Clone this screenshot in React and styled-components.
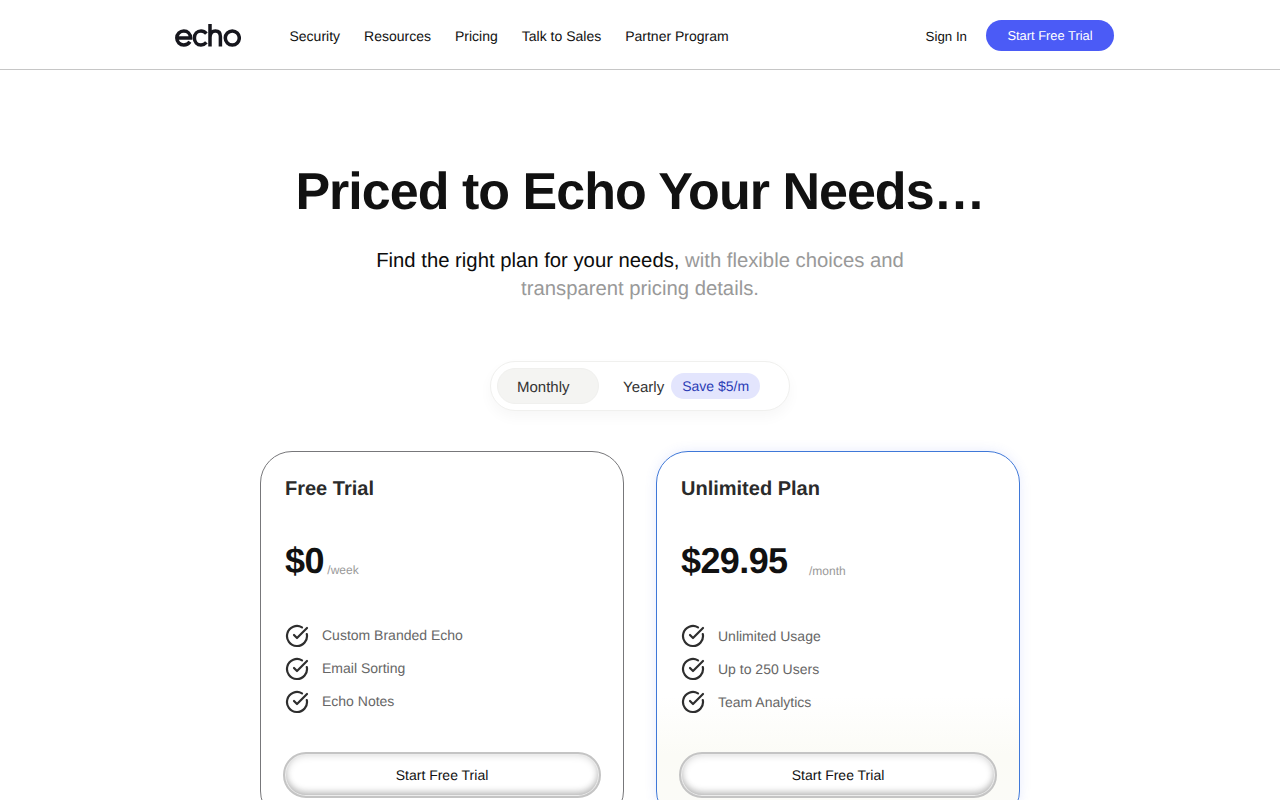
import React from "react";
import styled, { createGlobalStyle } from "styled-components";
import { CircleCheckBig } from "lucide-react";

const Global = createGlobalStyle`
  html, body { margin: 0; padding: 0; background: #fff; overflow: hidden; height: 800px; }
  body { font-family: "Liberation Sans", Arial, sans-serif; text-rendering: geometricPrecision; }
  * { box-sizing: border-box; }
`;

const Page = styled.div`
  width: 1280px;
  height: 800px;
  overflow: hidden;
`;

const Header = styled.header`
  height: 70px;
  border-bottom: 1px solid #c6c6c6;
  padding: 1px 166px 0 175px;
  display: flex;
  align-items: center;
  justify-content: space-between;
`;

const Left = styled.div`
  display: flex;
  align-items: center;
  gap: 48px;
`;

const Nav = styled.nav`
  display: flex;
  align-items: center;
  gap: 24px;
  padding: 2px 0 0 0.5px;
`;

const NavLink = styled.a`
  font-size: 14px;
  line-height: 20px;
  color: #111;
`;

const Right = styled.div`
  display: flex;
  align-items: center;
  gap: 19px;
`;

const SignIn = styled.a`
  font-size: 13.3px;
  color: #111;
  padding-top: 2px;
`;

const PrimaryButton = styled.button`
  width: 128px;
  height: 31px;
  border: none;
  border-radius: 16px;
  background: #4b5bf6;
  color: #fff;
  font: 12.9px "Liberation Sans", Arial, sans-serif;
  padding: 1px 0 0;
  text-rendering: geometricPrecision;
`;

const Hero = styled.section`
  display: flex;
  flex-direction: column;
  align-items: center;
  padding-top: 90px;
`;

const Title = styled.h1`
  margin: 0;
  font-size: 52px;
  line-height: 64px;
  font-weight: 700;
  letter-spacing: -0.98px;
  color: #111;
`;

const Sub = styled.p`
  margin: 23px 0 0;
  width: 560px;
  text-align: center;
  font-size: 20.3px;
  line-height: 28px;
  color: #999;
`;

const SubStrong = styled.span`
  color: #0c0c0c;
`;

const Toggle = styled.div`
  margin-top: 58px;
  width: 300px;
  height: 50px;
  padding: 7px 6px;
  border: 1px solid #f0f0ee;
  border-radius: 25px;
  background: #fff;
  box-shadow: 0 6px 14px rgba(0, 0, 0, 0.035);
  display: flex;
  align-items: center;
`;

const Monthly = styled.div`
  width: 102px;
  height: 36px;
  border-radius: 18px;
  background: #f4f4f2;
  border: 1px solid #f0f0ee;
  padding: 1px 0 0 19px;
  font-size: 15px;
  line-height: 36px;
  color: #333;
`;

const Yearly = styled.div`
  margin-left: 24px;
  font-size: 15px;
  color: #333;
  padding-top: 3px;
`;

const Save = styled.div`
  margin-left: 7px;
  width: 89px;
  height: 26px;
  border-radius: 13px;
  background: #e3e5fd;
  color: #2a3bb5;
  font-size: 14px;
  line-height: 26px;
  text-align: center;
`;

const Cards = styled.div`
  margin-top: 40px;
  display: flex;
  justify-content: center;
  gap: 32px;
`;

const Card = styled.article`
  width: 364px;
  height: 372px;
  flex: none;
  border: 1px solid ${(p) => (p.$featured ? "#3f78d8" : "#77777a")};
  border-radius: 32px;
  padding: 24px 24px 0;
  background: ${(p) =>
    p.$featured
      ? "linear-gradient(180deg, #fff 0%, #fff 66%, #fbfbf6 82%, #fbfbf8 100%)"
      : "#fff"};
  box-shadow: ${(p) => (p.$featured ? "0 0 12px rgba(80, 110, 240, 0.13)" : "none")};
`;

const PlanName = styled.h2`
  margin: 0;
  font-size: 20px;
  line-height: 26px;
  font-weight: 700;
  color: #2b2b2b;
`;

const PriceRow = styled.div`
  margin-top: 36px;
  height: 46px;
  display: flex;
  align-items: baseline;
`;

const Price = styled.span`
  font-size: 36px;
  line-height: 46px;
  font-weight: 700;
  letter-spacing: -0.6px;
  color: #111;
`;

const Period = styled.span`
  margin-left: ${(p) => p.$gap}px;
  font-size: 12px;
  color: #999;
  position: relative;
  top: ${(p) => p.$drop}px;
`;

const Features = styled.ul`
  list-style: none;
  margin: 40px 0 0;
  padding: 0;
  display: flex;
  flex-direction: column;
  gap: 9px;
`;

const Feature = styled.li`
  height: 24px;
  display: flex;
  align-items: center;
  gap: 13px;
  font-size: 14px;
  color: #666;
`;

const FeatureIcon = styled(CircleCheckBig).attrs({ strokeWidth: 2.2 })`
  width: 24px;
  height: 24px;
  flex: none;
  color: #2e2e2e;
`;

const FeatureText = styled.span`
  padding-bottom: ${(p) => p.$lift}px;
`;

const CardButton = styled.button`
  display: block;
  margin: 38px 0 0 -2px;
  width: 318px;
  height: 46px;
  border-radius: 23px;
  border: 2px solid #c4c4c4;
  background: #fff;
  box-shadow: inset 0 0 0 1px #ececec, inset 0 -5px 7px -1px rgba(0, 0, 0, 0.2), inset 0 0 9px rgba(0, 0, 0, 0.2);
  color: #111;
  font: 14px "Liberation Sans", Arial, sans-serif;
  text-rendering: geometricPrecision;
`;

const Logo = () => (
  <svg width="66" height="23" viewBox="0 0 66 23" fill="none" stroke="#16161d" strokeWidth="3.5">
    <path d="M1.8 14 H15.6 C15.4 9.8 12.6 7 8.8 7 C4.9 7 1.8 10 1.8 14 C1.8 18 4.9 21 8.8 21 C11.4 21 13.6 19.8 14.9 17.8" />
    <path d="M31.4 9.6 C30 8 28.2 7 26 7 C22.2 7 19.4 10 19.4 14 C19.4 18 22.2 21 26 21 C28.2 21 30 20 31.4 18.4" />
    <path d="M35 0 V22.6 M35 13.6 C35 9.4 37.4 7 40.4 7 C43.8 7 45.4 9.4 45.4 12.6 V22.6" />
    <circle cx="57.3" cy="14" r="7" />
  </svg>
);

const plans = [
  {
    name: "Free Trial", price: "$0", period: "/week", gap: 3.5, drop: 1, lift: 2,
    items: ["Custom Branded Echo", "Email Sorting", "Echo Notes"],
  },
  {
    name: "Unlimited Plan", price: "$29.95", period: "/month", gap: 21.5, drop: 2, lift: 0, featured: true,
    items: ["Unlimited Usage", "Up to 250 Users", "Team Analytics"],
  },
];

export default function App() {
  return (
    <Page>
      <Global />
      <Header>
        <Left>
          <Logo />
          <Nav>
            {["Security", "Resources", "Pricing", "Talk to Sales", "Partner Program"].map((l) => (
              <NavLink key={l}>{l}</NavLink>
            ))}
          </Nav>
        </Left>
        <Right>
          <SignIn>Sign In</SignIn>
          <PrimaryButton>Start Free Trial</PrimaryButton>
        </Right>
      </Header>
      <Hero>
        <Title>Priced to Echo Your Needs…</Title>
        <Sub>
          <SubStrong>Find the right plan for your needs,</SubStrong> with flexible choices and transparent pricing details.
        </Sub>
        <Toggle>
          <Monthly>Monthly</Monthly>
          <Yearly>Yearly</Yearly>
          <Save>Save $5/m</Save>
        </Toggle>
      </Hero>
      <Cards>
        {plans.map((p) => (
          <Card key={p.name} $featured={p.featured}>
            <PlanName>{p.name}</PlanName>
            <PriceRow>
              <Price>{p.price}</Price>
              <Period $gap={p.gap} $drop={p.drop}>{p.period}</Period>
            </PriceRow>
            <Features>
              {p.items.map((i) => (
                <Feature key={i}>
                  <FeatureIcon />
                  <FeatureText $lift={p.lift}>{i}</FeatureText>
                </Feature>
              ))}
            </Features>
            <CardButton>Start Free Trial</CardButton>
          </Card>
        ))}
      </Cards>
    </Page>
  );
}
